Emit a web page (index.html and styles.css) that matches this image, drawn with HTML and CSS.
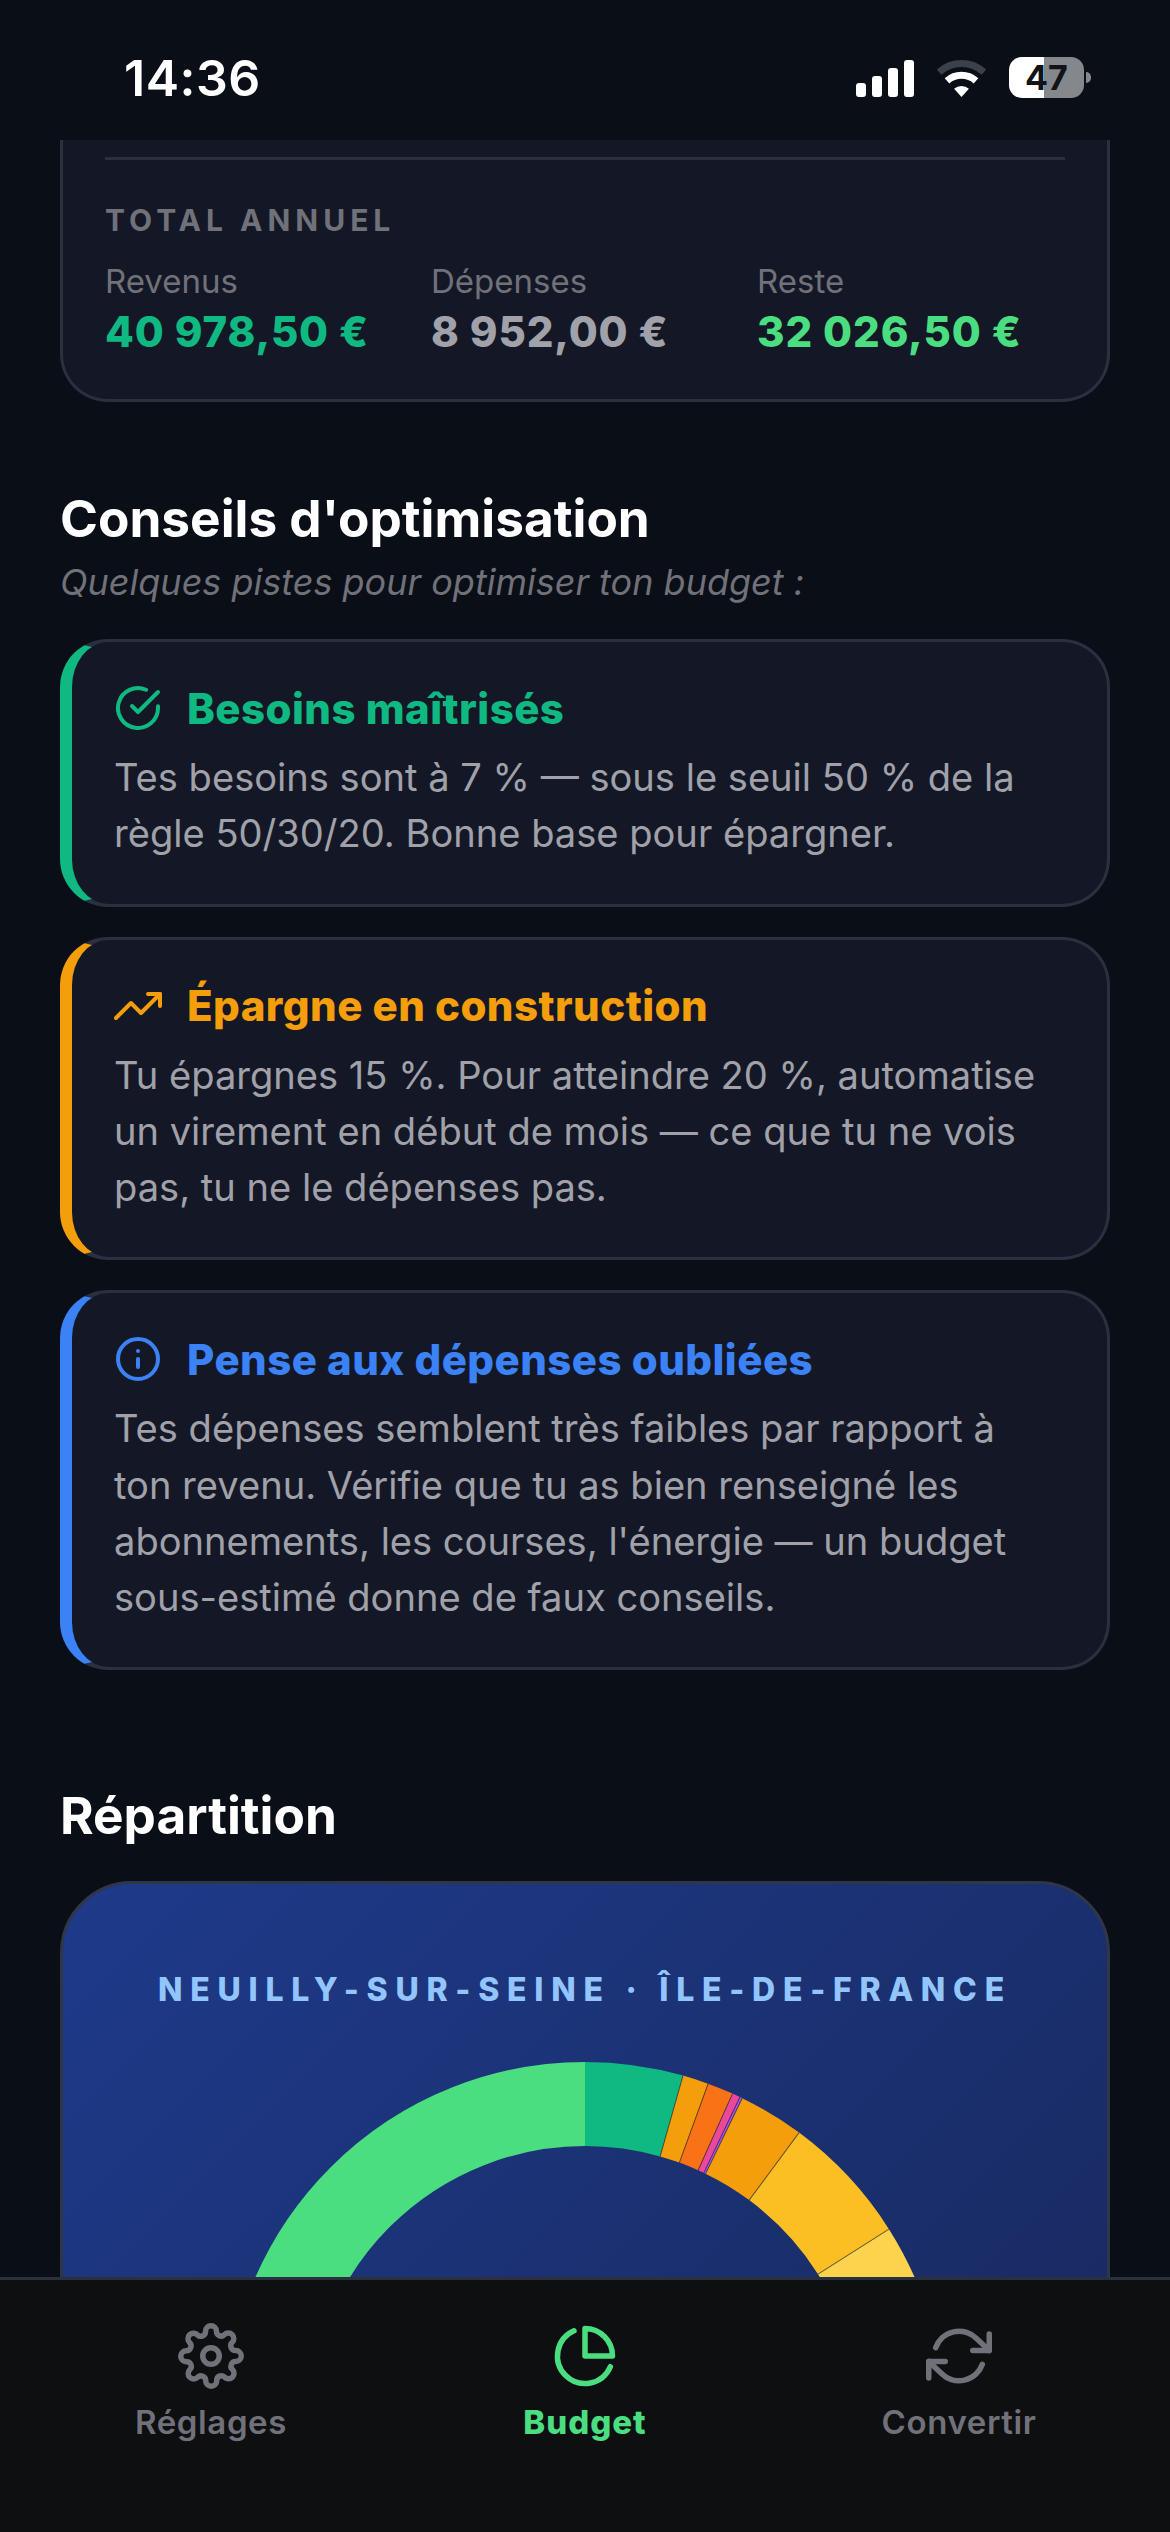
FILE: index.html
```html
<!DOCTYPE html>
<html lang="fr">

<head>
    <meta charset="UTF-8">
    <meta name="viewport" content="width=device-width, initial-scale=1.0">
    <title>Budget</title>
    <link rel="stylesheet" href="styles.css">
</head>

<body>

    <div class="phone">

        <header class="status">
            <span class="time">14:36</span>
            <div class="status-icons">
                <div class="cell">
                    <i class="bar1"></i>
                    <i class="bar2"></i>
                    <i class="bar3"></i>
                    <i class="bar4"></i>
                </div>
                <svg class="wifi" viewBox="0 0 51 37" width="51" height="37" fill="none">
                    <path d="M3.1 12.1A33.5 33.5 0 0 1 47.9 12.1" stroke="#3c4048" stroke-width="7"/>
                    <path d="M11 20.9A21.7 21.7 0 0 1 40 20.9" stroke="#fff" stroke-width="7"/>
                    <path d="M25.5 37L18.1 28.8A11 11 0 0 1 32.9 28.8Z" fill="#fff"/>
                </svg>
                <div class="battery">
                    <div class="battery-body">47</div>
                    <div class="battery-nub"></div>
                </div>
            </div>
        </header>

        <main class="content">

            <section class="card total">
                <div class="divider"></div>
                <div class="total-title">TOTAL ANNUEL</div>
                <div class="total-grid">
                    <div>
                        <div class="total-label">Revenus</div>
                        <div class="total-value teal">40 978,50 €</div>
                    </div>
                    <div>
                        <div class="total-label">Dépenses</div>
                        <div class="total-value grey">8 952,00 €</div>
                    </div>
                    <div>
                        <div class="total-label">Reste</div>
                        <div class="total-value green">32 026,50 €</div>
                    </div>
                </div>
            </section>

            <h2 class="heading tips-heading">Conseils d'optimisation</h2>
            <p class="subtitle">Quelques pistes pour optimiser ton budget :</p>

            <div class="tips">
                <article class="card tip tip-green">
                    <div class="tip-title">
                        <svg class="icon-48" viewBox="0 0 24 24">
                            <path d="M22 11.08V12a10 10 0 1 1-5.93-9.14"/>
                            <polyline points="22 4 12 14.01 9 11.01"/>
                        </svg>
                        <h3>Besoins maîtrisés</h3>
                    </div>
                    <p>Tes besoins sont à 7 % — sous le seuil 50 % de la règle 50/30/20. Bonne base pour épargner.</p>
                </article>

                <article class="card tip tip-orange">
                    <div class="tip-title">
                        <svg class="icon-48" viewBox="0 0 24 24">
                            <polyline points="23 6 13.5 15.5 8.5 10.5 1 18"/>
                            <polyline points="17 6 23 6 23 12"/>
                        </svg>
                        <h3>Épargne en construction</h3>
                    </div>
                    <p>Tu épargnes 15 %. Pour atteindre 20 %, automatise un virement en début de mois — ce que tu ne vois pas, tu ne le dépenses pas.</p>
                </article>

                <article class="card tip tip-blue">
                    <div class="tip-title">
                        <svg class="icon-48" viewBox="0 0 24 24">
                            <circle cx="12" cy="12" r="10"/>
                            <line x1="12" y1="16" x2="12" y2="12"/>
                            <line x1="12" y1="8" x2="12.01" y2="8"/>
                        </svg>
                        <h3>Pense aux dépenses oubliées</h3>
                    </div>
                    <p>Tes dépenses semblent très faibles par rapport à ton revenu. Vérifie que tu as bien renseigné les abonnements, les courses, l'énergie — un budget sous-estimé donne de faux conseils.</p>
                </article>
            </div>

            <h2 class="heading split-heading">Répartition</h2>

            <section class="split-card">
                <div class="split-place">NEUILLY-SUR-SEINE · ÎLE-DE-FRANCE</div>
                <svg class="donut" viewBox="0 0 720 720" width="720" height="720" fill="none">
                    <g stroke-width="84" transform="rotate(-90 360 360)">
                        <circle cx="360" cy="360" r="318" pathLength="360" stroke="#4ade80" stroke-dasharray="110 250" stroke-dashoffset="110"/>
                        <circle cx="360" cy="360" r="318" pathLength="360" stroke="#10b981" stroke-dasharray="15.8 360"/>
                        <circle cx="360" cy="360" r="318" pathLength="360" stroke="#f59e0b" stroke-dasharray="4.2 360" stroke-dashoffset="-15.8"/>
                        <circle cx="360" cy="360" r="318" pathLength="360" stroke="#f97316" stroke-dasharray="4.2 360" stroke-dashoffset="-20"/>
                        <circle cx="360" cy="360" r="318" pathLength="360" stroke="#ec4899" stroke-dasharray="1.3 360" stroke-dashoffset="-24.2"/>
                        <circle cx="360" cy="360" r="318" pathLength="360" stroke="#a855f7" stroke-dasharray="0.4 360" stroke-dashoffset="-25.5"/>
                        <circle cx="360" cy="360" r="318" pathLength="360" stroke="#f59e0b" stroke-dasharray="10.6 360" stroke-dashoffset="-25.9"/>
                        <circle cx="360" cy="360" r="318" pathLength="360" stroke="#fbbf24" stroke-dasharray="21.1 360" stroke-dashoffset="-36.5"/>
                        <circle cx="360" cy="360" r="318" pathLength="360" stroke="#fcd34d" stroke-dasharray="40 360" stroke-dashoffset="-57.6"/>
                    </g>
                    <g class="donut-lines">
                        <line x1="360" y1="84" x2="360" y2="0" transform="rotate(15.8 360 360)"/>
                        <line x1="360" y1="84" x2="360" y2="0" transform="rotate(20 360 360)"/>
                        <line x1="360" y1="84" x2="360" y2="0" transform="rotate(24.2 360 360)"/>
                        <line x1="360" y1="84" x2="360" y2="0" transform="rotate(25.5 360 360)"/>
                        <line x1="360" y1="84" x2="360" y2="0" transform="rotate(25.9 360 360)"/>
                        <line x1="360" y1="84" x2="360" y2="0" transform="rotate(36.5 360 360)"/>
                        <line x1="360" y1="84" x2="360" y2="0" transform="rotate(57.6 360 360)"/>
                    </g>
                </svg>
            </section>

        </main>

        <nav class="tabbar">
            <div class="tab">
                <svg class="icon-66" viewBox="0 0 24 24">
                    <circle cx="12" cy="12" r="3"/>
                    <path d="M19.4 15a1.65 1.65 0 0 0 .33 1.82l.06.06a2 2 0 0 1 0 2.83 2 2 0 0 1-2.83 0l-.06-.06a1.65 1.65 0 0 0-1.82-.33 1.65 1.65 0 0 0-1 1.51V21a2 2 0 0 1-2 2 2 2 0 0 1-2-2v-.09A1.65 1.65 0 0 0 9 19.4a1.65 1.65 0 0 0-1.82.33l-.06.06a2 2 0 0 1-2.83 0 2 2 0 0 1 0-2.83l.06-.06a1.65 1.65 0 0 0 .33-1.82 1.65 1.65 0 0 0-1.51-1H3a2 2 0 0 1-2-2 2 2 0 0 1 2-2h.09A1.65 1.65 0 0 0 4.6 9a1.65 1.65 0 0 0-.33-1.82l-.06-.06a2 2 0 0 1 0-2.83 2 2 0 0 1 2.83 0l.06.06a1.65 1.65 0 0 0 1.82.33H9a1.65 1.65 0 0 0 1-1.51V3a2 2 0 0 1 2-2 2 2 0 0 1 2 2v.09a1.65 1.65 0 0 0 1 1.51 1.65 1.65 0 0 0 1.82-.33l.06-.06a2 2 0 0 1 2.83 0 2 2 0 0 1 0 2.83l-.06.06a1.65 1.65 0 0 0-.33 1.82V9a1.65 1.65 0 0 0 1.51 1H21a2 2 0 0 1 2 2 2 2 0 0 1-2 2h-.09a1.65 1.65 0 0 0-1.51 1z"/>
                </svg>
                <span>Réglages</span>
            </div>
            <div class="tab active">
                <svg class="icon-66" viewBox="0 0 24 24">
                    <path d="M21.21 15.89A10 10 0 1 1 8 2.83"/>
                    <path d="M22 12A10 10 0 0 0 12 2v10z"/>
                </svg>
                <span>Budget</span>
            </div>
            <div class="tab">
                <svg class="icon-66" viewBox="0 0 24 24">
                    <polyline points="23 4 23 10 17 10"/>
                    <polyline points="1 20 1 14 7 14"/>
                    <path d="M3.51 9a9 9 0 0 1 14.85-3.36L23 10M1 14l4.64 4.36A9 9 0 0 0 20.49 15"/>
                </svg>
                <span>Convertir</span>
            </div>
        </nav>

    </div>

</body>

</html>
```

FILE: styles.css
```css
:root {
    --bg: #0a0e17;
    --card: #141826;
    --line: #2a3040;
    --muted: #71717a;
    --text: #a1a1aa;
    --teal: #10b981;
    --green: #4ade80;
    --orange: #f59e0b;
    --blue: #3b82f6;
}

* {
    margin: 0px;
    padding: 0px;
    box-sizing: border-box;
}

body {
    background-color: var(--bg);
    font-family: "Inter", "Liberation Sans", sans-serif;
    color: #fff;
}

.phone {
    width: 1170px;
    height: 2532px;
    display: flex;
    flex-direction: column;
    overflow: hidden;
}

/* status bar */

.status {
    height: 140px;
    flex-shrink: 0;
    display: flex;
    justify-content: space-between;
    align-items: flex-start;
    padding: 0 79px 0 124px;
}

.time {
    margin-top: 48px;
    font-size: 50px;
    line-height: 60px;
    font-weight: 600;
    letter-spacing: 0.5px;
}

.status-icons {
    margin-top: 57px;
    display: flex;
    align-items: center;
    height: 41px;
}

.cell {
    display: flex;
    align-items: flex-end;
    gap: 6px;
    height: 37px;
    margin-top: 2px;
}

.cell i {
    display: block;
    width: 10px;
    background-color: #fff;
    border-radius: 3px;
}

.bar1 { height: 14px; }
.bar2 { height: 21px; }
.bar3 { height: 29px; }
.bar4 { height: 37px; }

.wifi {
    margin: 2px 22px 0 22px;
}

.battery {
    display: flex;
    align-items: center;
    gap: 2px;
}

.battery-body {
    width: 75px;
    height: 41px;
    border-radius: 13px;
    background: linear-gradient(90deg, #fff 47%, #84878c 47%);
    color: #111318;
    font-size: 34px;
    line-height: 41px;
    font-weight: 700;
    text-align: center;
}

.battery-nub {
    width: 5px;
    height: 11px;
    border-radius: 0 5px 5px 0;
    background-color: #84878c;
}

/* scroll area */

.content {
    flex: 1;
    min-height: 0;
    overflow: hidden;
    padding: 0 60px;
}

.card {
    background-color: var(--card);
    border: 3px solid var(--line);
    border-radius: 48px;
}

.total {
    border-top: none;
    border-top-left-radius: 0;
    border-top-right-radius: 0;
    padding: 17px 42px 42px 42px;
}

.divider {
    height: 3px;
    background-color: var(--line);
}

.total-title {
    margin-top: 42px;
    font-size: 30px;
    line-height: 36px;
    font-weight: 700;
    letter-spacing: 5px;
    color: var(--muted);
}

.total-grid {
    display: grid;
    grid-template-columns: repeat(3, 1fr);
    gap: 18px;
    margin-top: 23px;
}

.total-label {
    font-size: 33px;
    line-height: 40px;
    color: var(--muted);
}

.total-value {
    margin-top: 6px;
    font-size: 42px;
    line-height: 50px;
    font-weight: 800;
    letter-spacing: 0.85px;
    white-space: nowrap;
}

.teal { color: var(--teal); }
.grey { color: var(--text); }
.green { color: var(--green); }

.heading {
    font-size: 51.3px;
    line-height: 60px;
    font-weight: 700;
}

.tips-heading {
    margin-top: 86px;
}

.subtitle {
    margin-top: 10px;
    font-size: 36px;
    line-height: 48px;
    font-style: italic;
    color: var(--muted);
}

/* tips */

.tips {
    display: flex;
    flex-direction: column;
    gap: 30px;
    margin-top: 33px;
}

.tip {
    border-left-width: 12px;
    padding: 42px 54px 42px 42px;
}

.tip-green { border-left-color: var(--teal); }
.tip-orange { border-left-color: var(--orange); }
.tip-blue { border-left-color: var(--blue); }

.tip-title {
    display: flex;
    align-items: center;
    gap: 25px;
    height: 48px;
    margin-bottom: 17px;
}

.tip-title h3 {
    font-size: 42px;
    font-weight: 800;
    letter-spacing: 0.45px;
}

.tip-green .tip-title { color: var(--teal); }
.tip-orange .tip-title { color: var(--orange); }
.tip-blue .tip-title { color: var(--blue); }

.tip p {
    font-size: 38.1px;
    line-height: 56.25px;
    color: var(--text);
}

.icon-48, .icon-66 {
    flex-shrink: 0;
    fill: none;
    stroke: currentColor;
    stroke-width: 2;
    stroke-linecap: round;
    stroke-linejoin: round;
}

.icon-48 {
    width: 48px;
    height: 48px;
}

.icon-66 {
    width: 66px;
    height: 66px;
}

/* repartition */

.split-heading {
    margin-top: 115px;
}

.split-card {
    margin-top: 36px;
    height: 1000px;
    display: flex;
    flex-direction: column;
    align-items: center;
    padding-top: 86px;
    border: 3px solid #2f3648;
    border-radius: 72px;
    background: linear-gradient(135deg, #1e3a8a 0%, #172554 100%);
}

.split-place {
    font-size: 32px;
    line-height: 40px;
    font-weight: 800;
    letter-spacing: 7.75px;
    color: #93c5fd;
}

.donut {
    flex-shrink: 0;
    margin-top: 52px;
}

.donut-lines line {
    stroke: rgba(15, 23, 42, 0.55);
    stroke-width: 1;
}

/* bottom tabs */

.tabbar {
    height: 255px;
    flex-shrink: 0;
    display: flex;
    padding: 43px 24px 0 24px;
    background-color: #0e0f11;
    border-top: 3px solid var(--line);
}

.tab {
    flex: 1;
    display: flex;
    flex-direction: column;
    align-items: center;
    color: var(--muted);
    font-size: 33px;
    line-height: 40px;
    font-weight: 600;
    letter-spacing: 0.6px;
}

.tab span {
    margin-top: 13px;
}

.tab.active {
    color: var(--green);
    font-weight: 800;
    letter-spacing: 1px;
}
```
